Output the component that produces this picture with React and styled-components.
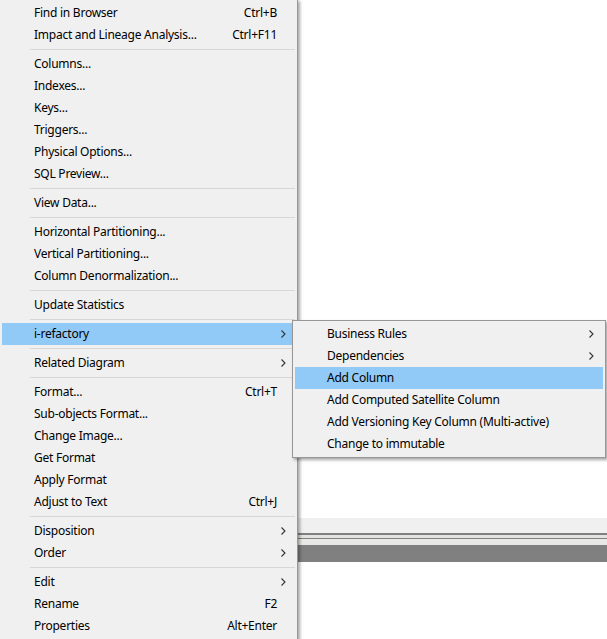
import React from 'react';
import styled, { createGlobalStyle } from 'styled-components';

const GlobalStyle = createGlobalStyle`
  html, body {
    margin: 0;
    padding: 0;
    background: #ffffff;
    overflow: hidden;
  }
  #root {
    width: 607px;
    height: 639px;
  }
`;

const Workspace = styled.div`
  position: relative;
  width: 607px;
  height: 639px;
  display: flex;
  flex-direction: column;
  background: #ffffff;
`;

const Canvas = styled.div`
  height: 518px;
  background: #ffffff;
`;

const Strip = styled.div`
  display: flex;
  flex-direction: column;
`;

const Band = styled.div`
  height: ${p => p.$h}px;
  background: ${p => p.$c};
`;

const Menu = styled.div`
  position: absolute;
  left: ${p => p.$x}px;
  top: ${p => p.$y}px;
  width: ${p => p.$w}px;
  box-sizing: border-box;
  padding: 2px;
  background: #f0f0f0;
  border: 1px solid #979797;
  box-shadow: 2px 2px 3px rgba(0, 0, 0, 0.35);
  font-family: "Segoe UI", "Noto Sans", "Liberation Sans", sans-serif;
  font-size: 12px;
  letter-spacing: -0.25px;
  color: #000000;
  display: flex;
  flex-direction: column;
`;

const Item = styled.div`
  display: grid;
  grid-template-columns: 32px 1fr auto 18px;
  align-items: center;
  height: 22px;
  line-height: 22px;
  white-space: nowrap;
  background: ${p => (p.$active ? '#91c9f7' : 'transparent')};
`;

const Label = styled.span`
  grid-column: 2;
`;

const Shortcut = styled.span`
  grid-column: 3;
  padding-left: 20px;
`;

const ArrowCell = styled.span`
  grid-column: 4;
  display: flex;
  justify-content: flex-end;
  padding-right: 9px;
`;

const Separator = styled.div`
  height: 7px;
  margin-left: 28px;
  display: flex;
  align-items: center;
  &::after {
    content: '';
    flex: 1;
    height: 1px;
    background: #d7d7d7;
  }
`;

const Chevron = () => (
  <svg width="5" height="8" viewBox="0 0 5 8">
    <path d="M0.5 0.5 L4 4 L0.5 7.5" fill="none" stroke="#333" strokeWidth="1.1" />
  </svg>
);

const mainMenu = [
  { label: 'Find in Browser', key: 'Ctrl+B' },
  { label: 'Impact and Lineage Analysis...', key: 'Ctrl+F11' },
  '-',
  { label: 'Columns...' },
  { label: 'Indexes...' },
  { label: 'Keys...' },
  { label: 'Triggers...' },
  { label: 'Physical Options...' },
  { label: 'SQL Preview...' },
  '-',
  { label: 'View Data...' },
  '-',
  { label: 'Horizontal Partitioning...' },
  { label: 'Vertical Partitioning...' },
  { label: 'Column Denormalization...' },
  '-',
  { label: 'Update Statistics' },
  '-',
  { label: 'i-refactory', sub: true, active: true },
  '-',
  { label: 'Related Diagram', sub: true },
  '-',
  { label: 'Format...', key: 'Ctrl+T' },
  { label: 'Sub-objects Format...' },
  { label: 'Change Image...' },
  { label: 'Get Format' },
  { label: 'Apply Format' },
  { label: 'Adjust to Text', key: 'Ctrl+J' },
  '-',
  { label: 'Disposition', sub: true },
  { label: 'Order', sub: true },
  '-',
  { label: 'Edit', sub: true },
  { label: 'Rename', key: 'F2' },
  { label: 'Properties', key: 'Alt+Enter' },
];

const refactoryMenu = [
  { label: 'Business Rules', sub: true },
  { label: 'Dependencies', sub: true },
  { label: 'Add Column', active: true },
  { label: 'Add Computed Satellite Column' },
  { label: 'Add Versioning Key Column (Multi-active)' },
  { label: 'Change to immutable' },
];

const MenuList = ({ items, x, y, w }) => (
  <Menu $x={x} $y={y} $w={w}>
    {items.map((it, i) =>
      it === '-' ? (
        <Separator key={i} />
      ) : (
        <Item key={i} $active={it.active}>
          <Label>{it.label}</Label>
          {it.key && <Shortcut>{it.key}</Shortcut>}
          <ArrowCell>{it.sub && <Chevron />}</ArrowCell>
        </Item>
      )
    )}
  </Menu>
);

export default function App() {
  return (
    <>
      <GlobalStyle />
      <Workspace>
        <Canvas />
        <Strip>
          <Band $h={15} $c="#f0f0f0" />
          <Band $h={2} $c="#808080" />
          <Band $h={3} $c="#e3e3e0" />
          <Band $h={1} $c="#808080" />
          <Band $h={6} $c="#e8e8e4" />
          <Band $h={17} $c="#808080" />
        </Strip>
        <MenuList items={mainMenu} x={-1} y={-1} w={299} />
        <MenuList items={refactoryMenu} x={292} y={320} w={314} />
      </Workspace>
    </>
  );
}
